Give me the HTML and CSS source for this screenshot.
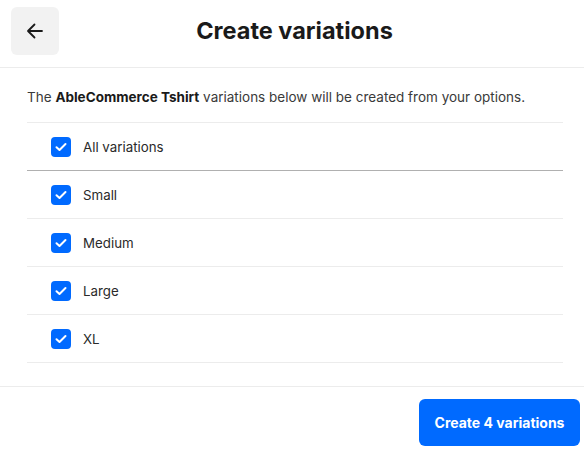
FILE: index.html
```html
<!DOCTYPE html>
<html>
<head>
<meta charset="utf-8">
<link rel="stylesheet" href="styles.css">
</head>
<body>
<div class="page">
  <header class="header">
    <button class="back" aria-label="Back">
      <svg width="20" height="20" viewBox="0 0 20 20"><path d="M17 10H3.5M9.5 3.5L3 10l6.5 6.5" fill="none" stroke="#1a1a1a" stroke-width="1.8" stroke-linecap="round" stroke-linejoin="round"/></svg>
    </button>
    <h1 class="title">Create variations</h1>
    <span class="spacer"></span>
  </header>
  <main class="content">
    <p class="desc">The <b>AbleCommerce Tshirt</b> variations below will be created from your options.</p>
    <ul class="list">
      <li class="row row-all"><span class="check"><svg width="12" height="10" viewBox="0 0 12 10"><path d="M1.5 5.2l3 2.8L10.5 2" fill="none" stroke="#fff" stroke-width="2" stroke-linecap="round" stroke-linejoin="round"/></svg></span><span class="label">All variations</span></li>
      <li class="row"><span class="check"><svg width="12" height="10" viewBox="0 0 12 10"><path d="M1.5 5.2l3 2.8L10.5 2" fill="none" stroke="#fff" stroke-width="2" stroke-linecap="round" stroke-linejoin="round"/></svg></span><span class="label">Small</span></li>
      <li class="row"><span class="check"><svg width="12" height="10" viewBox="0 0 12 10"><path d="M1.5 5.2l3 2.8L10.5 2" fill="none" stroke="#fff" stroke-width="2" stroke-linecap="round" stroke-linejoin="round"/></svg></span><span class="label">Medium</span></li>
      <li class="row"><span class="check"><svg width="12" height="10" viewBox="0 0 12 10"><path d="M1.5 5.2l3 2.8L10.5 2" fill="none" stroke="#fff" stroke-width="2" stroke-linecap="round" stroke-linejoin="round"/></svg></span><span class="label">Large</span></li>
      <li class="row"><span class="check"><svg width="12" height="10" viewBox="0 0 12 10"><path d="M1.5 5.2l3 2.8L10.5 2" fill="none" stroke="#fff" stroke-width="2" stroke-linecap="round" stroke-linejoin="round"/></svg></span><span class="label">XL</span></li>
    </ul>
  </main>
  <footer class="footer">
    <button class="primary">Create 4 variations</button>
  </footer>
</div>
</body>
</html>
```
FILE: styles.css
```css
* { box-sizing: border-box; }
html, body { margin: 0; padding: 0; background: #fff; }
body { font-family: Inter, "Noto Sans", sans-serif; color: #1a1a1a; }
.page { width: 584px; height: 454px; display: flex; flex-direction: column; }
.header {
  height: 68px;
  border-bottom: 1px solid #ececec;
  display: grid;
  grid-template-columns: 48px 1fr 48px;
  align-items: start;
  padding: 7px 11px 0 11px;
}
.back {
  width: 48px; height: 48px;
  border: none; border-radius: 6px;
  background: #f2f2f2;
  display: flex; align-items: center; justify-content: center;
  padding: 0; margin: 0;
}
.title {
  margin: 0;
  padding-left: 5px;
  text-align: center;
  font-size: 23.5px;
  font-weight: 700;
  line-height: 48px;
  color: #1a1a1a;
}
.content { padding: 0 21px 0 27px; }
.desc {
  margin: 0;
  padding: 19px 0 15px;
  font-size: 13.5px;
  line-height: 20px;
  color: #3a3a3a;
}
.desc b { color: #1a1a1a; font-weight: 700; }
.list { list-style: none; margin: 0; padding: 0; border-bottom: 1px solid #ececec; }
.row {
  height: 48px;
  border-top: 1px solid #ececec;
  display: flex; align-items: center;
  padding-left: 24px;
  gap: 12px;
}
.row-all + .row { border-top-color: #b0b0b0; }
.check {
  width: 20px; height: 20px;
  border-radius: 4px;
  background: #006aff;
  display: flex; align-items: center; justify-content: center;
}
.label { font-size: 13.3px; line-height: 20px; color: #2a2a2a; }
.footer {
  margin-top: 23px;
  border-top: 1px solid #ececec;
  display: flex; justify-content: flex-end;
  padding: 12px 4px 0 0;
}
.primary {
  width: 161px; height: 47px;
  border: none; border-radius: 6px;
  background: #006aff;
  color: #fff;
  font-family: Inter, "Noto Sans", sans-serif;
  font-size: 14px; font-weight: 700;
  padding: 0;
}
```
